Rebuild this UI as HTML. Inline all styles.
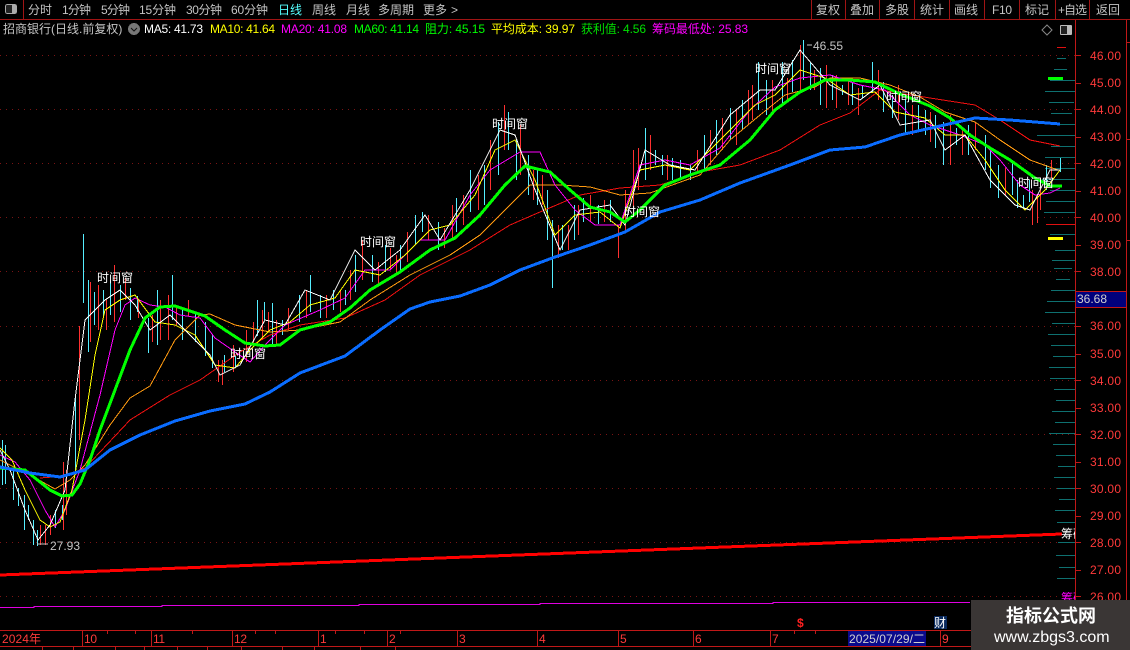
<!DOCTYPE html>
<html><head><meta charset="utf-8"><style>
html,body{margin:0;padding:0;background:#000;width:1130px;height:650px;overflow:hidden}
svg{display:block}
text{font-family:"Liberation Sans","WenQuanYi Zen Hei","Noto Sans CJK SC",sans-serif;font-size:12px}
.t{fill:#c4c4c4}.a{fill:#ff3a3a}.w{fill:#fff}
polyline{fill:none;stroke-linejoin:round}
</style></head><body>
<svg width="1130" height="650" viewBox="0 0 1130 650" shape-rendering="crispEdges">
<rect width="1130" height="650" fill="#000"/>
<!-- grid -->
<g stroke="#7a1414" stroke-dasharray="1 5">
<path d="M0 55.5H1075M0 109.5H1075M0 163.5H1075M0 217.5H1075M0 271.5H1075M0 326.5H1075M0 380.5H1075M0 434.5H1075M0 488.5H1075M0 542.5H1075M0 596.5H1075"/>
</g>
<!-- toolbar -->
<path d="M0 19.5H1130M23.5 0V19M811.5 0V19M845.5 0V19M879.5 0V19M914.5 0V19M949.5 0V19M984.5 0V19M1019.5 0V19M1055.5 0V19M1089.5 0V19" stroke="#a01414" fill="none"/>
<rect x="5.5" y="4.5" width="11" height="9" rx="2" fill="#222" stroke="#aaa"/><rect x="12" y="5" width="4" height="8" fill="#aaa"/>
<g class="t">
<text x="28" y="14" class="t">分时</text><text x="62" y="14" class="t" textLength="29">1分钟</text><text x="101" y="14" class="t" textLength="29">5分钟</text><text x="139" y="14" class="t" textLength="37">15分钟</text><text x="186" y="14" class="t" textLength="36">30分钟</text><text x="231" y="14" class="t" textLength="37">60分钟</text>
<text x="278" y="14" fill="#55ffff">日线</text><text x="312" y="14" class="t">周线</text><text x="346" y="14" class="t">月线</text><text x="378" y="14" class="t">多周期</text><text x="423" y="14" class="t">更多</text><text x="451" y="14" class="t">&gt;</text>
<text x="816" y="14" class="t">复权</text><text x="850" y="14" class="t">叠加</text><text x="885" y="14" class="t">多股</text><text x="920" y="14" class="t">统计</text><text x="954" y="14" class="t">画线</text><text x="992" y="14" class="t" textLength="20">F10</text><text x="1025" y="14" class="t">标记</text><text x="1058" y="14" class="t" textLength="29">+自选</text><text x="1096" y="14" class="t">返回</text>
</g>
<!-- legend -->
<text x="3" y="33" class="t">招商银行(日线.前复权)</text>
<circle cx="134" cy="29" r="6" fill="#777"/><path d="M131 28l3 3 3-3" stroke="#111" fill="none" shape-rendering="auto"/>
<text x="144" y="33" fill="#fff" textLength="59">MA5: 41.73</text>
<text x="210" y="33" fill="#ffff00" textLength="65">MA10: 41.64</text>
<text x="281" y="33" fill="#ff00ff" textLength="66">MA20: 41.08</text>
<text x="354" y="33" fill="#00ff00" textLength="65">MA60: 41.14</text>
<text x="425" y="33" fill="#00ff00" textLength="60">阻力: 45.15</text>
<text x="491" y="33" fill="#ffff00" textLength="84">平均成本: 39.97</text>
<text x="581" y="33" fill="#00e000" textLength="65">获利值: 4.56</text>
<text x="652" y="33" fill="#ff00ff" textLength="96">筹码最低处: 25.83</text>
<path d="M1047 25l5 5-5 5-5-5z" stroke="#888" fill="none" shape-rendering="auto"/>
<rect x="1060.5" y="25.5" width="11" height="9" rx="1" fill="#222" stroke="#bbb"/><rect x="1067" y="26" width="4" height="8" fill="#bbb"/>
<!-- chips -->
<path stroke="#0e7070" fill="none" d="M1057 58.5H1066M1054 69.5H1067M1050 80.5H1075M1045 91.5H1075M1049 102.5H1074M1051 113.5H1072M1055 124.5H1075M1037 135.5H1075M1051 146.5H1075M1045 157.5H1075M1045 168.5H1075M1042 179.5H1075M1050 190.5H1075M1046 201.5H1075M1044 212.5H1075M1050 234.5H1075M1055 250.5H1075M1052 260.5H1075M1054 268.5H1072M1056 279.5H1070M1051 290.5H1075M1047 301.5H1075M1045 312.5H1075M1052 323.5H1075M1048 334.5H1075M1051 345.5H1075M1053 356.5H1075M1049 367.5H1075M1050 378.5H1075M1054 389.5H1075M1056 400.5H1075M1052 411.5H1075M1055 422.5H1075M1049 433.5H1075M1053 444.5H1075M1056 455.5H1075M1058 466.5H1075M1054 477.5H1075M1057 488.5H1075M1059 499.5H1075M1055 510.5H1075M1057 522.5H1075M1058 542.5H1075M1056 555.5H1075M1059 567.5H1075M1057 578.5H1075"/>
<path stroke="#e01010" fill="none" d="M1057 47.5H1066M1046 224.5H1075"/>
<rect x="1048" y="77" width="15" height="3" fill="#00ff00"/>
<rect x="1048" y="237" width="15" height="3" fill="#ffff00"/>
<!-- candles -->
<g transform="translate(.5,0)">
<path fill="none" stroke="#55eeff" d="M2 440V485M5 445V484M13 470V500M18 488V506M24 495V530M28 505V520M33 520V545M37 530V546M55 510V528M62 505V520M75 395V470M83 234V303M88 280V352M94 292V325M103 290V318M110 280V315M120 285V312M130 288V320M137 296V312M148 318V353M157 290V345M172 275V320M182 310V340M195 313V342M205 322V356M212 335V368M224 355V372M235 355V368M257 300V336M264 302V320M272 303V345M282 320V335M299 295V322M310 275V312M320 295V318M333 290V310M345 290V305M355 255V292M372 255V282M385 245V272M400 245V270M415 215V245M422 212V232M438 222V250M456 198V232M470 170V212M484 165V205M498 122V175M508 112V150M516 140V180M528 155V195M537 170V205M547 190V240M552 220V288M562 225V250M574 205V240M583 198V222M598 205V224M610 200V222M645 128V180M655 150V165M662 155V175M672 158V180M680 160V178M690 165V180M704 135V170M716 120V155M730 108V140M742 100V130M758 62V110M766 80V115M782 62V105M792 60V92M803 40V80M810 62V90M820 68V105M832 75V100M842 85V95M852 82V105M862 85V98M872 62V92M883 82V112M892 95V118M905 100V135M918 105V130M925 110V135M935 115V148M943 122V165M956 128V145M968 125V155M985 135V170M990 150V188M998 165V198M1012 162V195M1017 180V208M1023 195V208M1029 180V202M1046 165V190M1060 158V172"/>
<path fill="none" stroke="#ff3030" d="M40 525V545M45 525V545M50 515V535M63 462V530M66 470V515M79 326V440M90 282V342M98 285V330M106 300V330M114 265V322M125 278V300M138 300V318M152 315V342M160 300V340M168 295V340M176 306V325M188 300V316M218 360V382M222 360V385M233 345V372M246 330V362M253 322V345M262 310V340M268 312V332M276 320V345M288 308V330M306 290V318M326 295V318M340 290V312M350 270V300M362 240V280M378 262V285M390 248V270M396 255V275M407 232V262M428 215V240M444 228V248M452 205V240M463 195V225M478 175V210M490 140V190M504 105V150M520 125V175M533 170V200M542 175V205M558 225V258M568 225V250M578 205V235M590 195V222M604 200V222M618 225V258M625 190V232M633 150V215M638 148V190M650 135V170M667 155V180M697 150V172M710 130V165M722 118V150M736 110V145M748 90V125M752 85V120M772 80V115M787 78V102M800 45V90M814 70V90M826 65V108M836 75V108M848 80V105M858 88V115M878 70V100M898 85V120M912 105V135M930 112V142M950 115V165M962 130V155M975 122V150M1005 168V195M1032 190V225M1037 195V223M1040 178V210M1051 160V178"/>
</g>
<!-- MA lines -->
<g>
<polyline stroke="#f01010" stroke-width="1" points="40,478 65,476 85,468 100,452 130,420 170,395 200,380 240,352 270,335 300,325 345,318 385,300 420,275 470,250 510,225 540,212 580,195 620,188 660,185 700,172 740,165 780,150 820,125 850,113 880,90 930,98 975,105 1000,120 1030,140 1060,146"/>
<polyline stroke="#ff9a10" stroke-width="1" points="0,460 30,475 55,489 70,480 85,465 110,425 130,398 150,386 175,340 200,315 210,314 235,325 270,332 300,330 340,322 370,300 410,275 450,255 480,235 510,205 530,185 560,185 590,187 620,195 650,193 700,175 730,140 760,115 785,95 815,87 830,78 860,78 890,85 920,97 945,112 975,122 1000,140 1030,160 1058,170"/>
<polyline stroke="#ff00ff" stroke-width="1" points="0,455 15,462 30,480 45,510 55,527 65,510 80,470 100,395 115,330 125,305 135,298 150,305 165,307 180,315 200,318 215,338 235,352 250,362 265,345 285,325 320,310 345,298 365,270 390,270 420,240 445,240 470,195 490,170 520,152 540,152 555,185 575,210 595,225 620,225 640,165 665,160 690,165 720,148 750,110 775,87 800,78 830,75 860,85 885,90 910,115 930,125 960,135 985,145 1000,160 1020,185 1035,195 1050,193 1060,188"/>
<polyline stroke="#ffff00" stroke-width="1" points="0,448 12,460 25,490 40,520 50,527 60,522 72,490 85,420 95,355 105,310 120,300 135,295 155,322 175,325 195,335 215,365 235,368 250,350 270,330 290,322 310,305 335,298 355,270 380,275 405,255 430,230 450,225 475,195 495,150 515,140 535,180 555,235 575,215 600,212 620,228 640,170 665,165 690,170 725,135 755,105 775,95 800,70 825,78 850,95 875,92 895,112 925,118 945,135 965,135 985,160 1005,190 1025,210 1045,190 1060,170"/>
<polyline stroke="#ffffff" stroke-width="1" points="0,450 10,470 25,510 38,540 50,525 65,490 75,400 85,320 95,310 105,300 120,290 135,305 150,330 170,315 185,330 210,355 220,375 240,365 265,320 285,325 305,290 330,300 355,250 375,270 400,250 425,215 440,240 470,190 500,130 515,135 535,190 560,250 580,210 610,205 625,225 645,150 670,165 695,170 730,115 760,90 775,90 800,50 830,85 860,100 880,85 900,125 930,120 945,150 965,135 990,180 1015,205 1030,210 1050,170 1060,170"/>
<polyline stroke="#00ff00" stroke-width="3" points="0,468 25,470 40,482 50,490 62,496 72,495 80,484 90,460 100,430 115,390 130,350 145,318 160,307 175,306 190,311 205,316 225,330 245,343 265,346 280,345 300,330 330,322 350,308 370,290 400,272 430,250 455,238 480,215 505,185 525,166 550,172 570,190 590,207 610,212 625,222 640,210 665,185 690,175 720,165 750,140 775,110 800,92 825,80 850,80 875,82 900,94 930,106 950,118 970,135 990,148 1010,160 1035,178 1050,186 1062,186"/>
<polyline stroke="#0a6cff" stroke-width="3" points="0,467 30,473 60,477 85,470 110,450 140,435 175,421 210,411 245,404 270,392 300,373 345,356 380,330 410,309 430,302 460,296 490,285 520,270 555,257 590,245 625,232 660,212 700,200 740,183 790,165 830,150 865,147 900,135 940,126 975,118 1010,120 1060,124"/>
</g>
<path stroke="#ff0000" stroke-width="3" fill="none" d="M0 575L1062 534"/>
<path stroke="#e000e0" stroke-width="1" fill="none" d="M0 607.5H34V606.5H162V605.5H359V604.5H540V603.5H773V602.5H970" />
<!-- labels on chart -->
<g class="w">
<text x="97" y="282" class="w">时间窗</text><text x="230" y="358" class="w">时间窗</text><text x="360" y="246" class="w">时间窗</text><text x="492" y="128" class="w">时间窗</text><text x="624" y="216" class="w">时间窗</text><text x="755" y="73" class="w">时间窗</text><text x="886" y="101" class="w">时间窗</text><text x="1018" y="187" class="w">时间窗</text>
</g>
<text x="813" y="50" fill="#c4c4c4" textLength="30">46.55</text>
<text x="50" y="550" fill="#c4c4c4" textLength="30">27.93</text>
<path d="M807 45H812M37 544H48" stroke="#c4c4c4"/>
<svg x="1061" y="524" width="14" height="16"><text x="0" y="14" class="w">筹码</text></svg>
<svg x="1061" y="592" width="14" height="8"><text x="0" y="10" fill="#ff00ff">筹码</text></svg>
<!-- right axis -->
<path stroke="#c01818" fill="none" d="M1075.5 20V650M1126.5 20V650M1075 55.5H1081M1075 83.5H1081M1075 109.5H1081M1075 137.5H1081M1075 163.5H1081M1075 191.5H1081M1075 217.5H1081M1075 245.5H1081M1075 271.5H1081M1075 326.5H1081M1075 354.5H1081M1075 380.5H1081M1075 408.5H1081M1075 434.5H1081M1075 462.5H1081M1075 488.5H1081M1075 516.5H1081M1075 542.5H1081M1075 570.5H1081M1075 596.5H1081M1126 42.5H1130M1126 139.5H1130M1126 240.5H1130"/>
<g>
<text x="1090" y="60" class="a" textLength="31">46.00</text><text x="1090" y="87" class="a" textLength="31">45.00</text><text x="1090" y="114" class="a" textLength="31">44.00</text><text x="1090" y="141" class="a" textLength="31">43.00</text><text x="1090" y="168" class="a" textLength="31">42.00</text><text x="1090" y="195" class="a" textLength="31">41.00</text><text x="1090" y="222" class="a" textLength="31">40.00</text><text x="1090" y="249" class="a" textLength="31">39.00</text><text x="1090" y="276" class="a" textLength="31">38.00</text><text x="1090" y="330" class="a" textLength="31">36.00</text><text x="1090" y="358" class="a" textLength="31">35.00</text><text x="1090" y="385" class="a" textLength="31">34.00</text><text x="1090" y="412" class="a" textLength="31">33.00</text><text x="1090" y="439" class="a" textLength="31">32.00</text><text x="1090" y="466" class="a" textLength="31">31.00</text><text x="1090" y="493" class="a" textLength="31">30.00</text><text x="1090" y="520" class="a" textLength="31">29.00</text><text x="1090" y="547" class="a" textLength="31">28.00</text><text x="1090" y="574" class="a" textLength="31">27.00</text><text x="1090" y="601" class="a" textLength="31">26.00</text>
</g>
<rect x="1075.5" y="291.5" width="51" height="16" fill="#00007c" stroke="#c01818"/>
<text x="1077" y="303" fill="#d0d0d0" textLength="30">36.68</text>
<!-- bottom axis -->
<path stroke="#c01818" fill="none" d="M0 630.5H1130M0 646.5H1130M82.5 630V646M151.5 630V646M232.5 630V646M318.5 630V646M387.5 630V646M457.5 630V646M537.5 630V646M618.5 630V646M693.5 630V646M770.5 630V646M940.5 630V646M42.5 646V650M73.5 646V650M115.5 646V650M144.5 646V650M177.5 646V650M207.5 646V650M241.5 646V650M282.5 646V650M314.5 646V650M360.5 646V650M395.5 646V650M107.5 630V634M135.5 630V634M192.5 630V634M255.5 630V634M275.5 630V634M335.5 630V634M364.5 630V634M400.5 630V634M794.5 630V634M815.5 630V634"/>
<g>
<text x="2" y="643" class="a" textLength="39">2024年</text><text x="84" y="643" class="a" textLength="13">10</text><text x="153" y="643" class="a" textLength="12">11</text><text x="234" y="643" class="a" textLength="13">12</text><text x="320" y="643" class="a">1</text><text x="389" y="643" class="a">2</text><text x="459" y="643" class="a">3</text><text x="539" y="643" class="a">4</text><text x="620" y="643" class="a">5</text><text x="695" y="643" class="a">6</text><text x="772" y="643" class="a">7</text><text x="942" y="643" class="a">9</text>
</g>
<text x="797" y="627" fill="#ff2020" style="font-weight:bold">$</text>
<rect x="934" y="616" width="13" height="13" fill="#0a2a5e"/><text x="934" y="627" fill="#fff">财</text>
<rect x="848" y="631" width="78" height="15" fill="#0a0a8c"/>
<text x="849" y="643" fill="#d0d0d0" textLength="76">2025/07/29/二</text>
<!-- watermark -->
<rect x="971" y="600" width="159" height="50" fill="#3a3635"/>
<text x="1006" y="622" fill="#fff" style="font-size:18px;font-weight:bold">指标公式网</text>
<text x="994" y="642" fill="#fff" style="font-size:16px">www.zbgs3.com</text>
</svg>
</body></html>
